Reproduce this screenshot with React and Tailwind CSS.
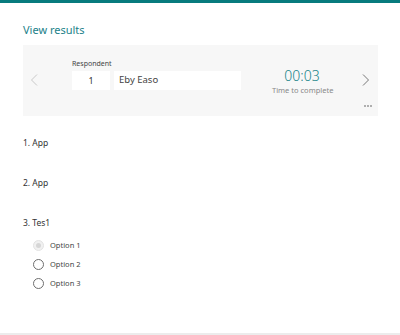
const options = ['Option 1', 'Option 2', 'Option 3'];

const Chevron = ({ dir, color }) => (
  <svg width="8" height="12" viewBox="0 0 8 12" fill="none">
    <path
      d={dir === 'left' ? 'M7 0.5 L1.5 6 L7 11.5' : 'M1 0.5 L6.5 6 L1 11.5'}
      stroke={color}
      strokeWidth="1"
    />
  </svg>
);

const Radio = ({ disabled }) =>
  disabled ? (
    <span className="w-[11px] h-[11px] rounded-full border border-[#e3e3e3] bg-[#f1f1f1] flex items-center justify-center">
      <span className="w-[5px] h-[5px] rounded-full bg-[#d6d6d6]" />
    </span>
  ) : (
    <span className="w-[11px] h-[11px] rounded-full border border-[#6e6e6e] bg-white" />
  );

export default function App() {
  return (
    <div className="w-[400px] h-[335px] bg-white flex flex-col font-['Noto_Sans',sans-serif] text-[#333]">
      <div className="h-[3px] bg-[#077b7e]" />
      <div className="flex-1 pl-[23px] pr-[22px]">
        <h1 className="mt-[20px] text-[11px] leading-[14px] text-[#1b8189]">View results</h1>

        <div className="mt-[8px] h-[71px] bg-[#f7f7f7] flex flex-col pt-[14px]">
          <div className="flex items-start">
            <div className="mt-[15px] ml-[7px]">
              <Chevron dir="left" color="#c8c8c8" />
            </div>
            <div className="ml-[34px]">
              <div className="text-[7px] leading-[10px] text-[#444]">Respondent</div>
              <div className="mt-[2px] flex gap-[4px]">
                <div className="w-[38px] h-[19px] bg-white flex items-center justify-center text-[9px]">1</div>
                <div className="w-[127px] h-[19px] bg-white flex items-center pl-[5px] text-[9.5px] text-[#444]">Eby Easo</div>
              </div>
            </div>
            <div className="ml-[31px] mt-[8px] w-[60px] text-center">
              <div className="text-[14px] leading-[18px] font-light text-[#168489]">00:03</div>
              <div className="text-[7.5px] leading-[10px] text-[#888] whitespace-nowrap">Time to complete</div>
            </div>
            <div className="ml-auto mr-[8px] mt-[15px]">
              <Chevron dir="right" color="#777" />
            </div>
          </div>
          <div className="mt-auto flex justify-end pr-[6px] pb-[9px]">
            <svg width="8" height="2" viewBox="0 0 8 2">
              <circle cx="1" cy="1" r="0.8" fill="#555" />
              <circle cx="4" cy="1" r="0.8" fill="#555" />
              <circle cx="7" cy="1" r="0.8" fill="#555" />
            </svg>
          </div>
        </div>

        <div className="mt-[21px] text-[8.5px] leading-[12px]">1. App</div>
        <div className="mt-[28px] text-[8.5px] leading-[12px]">2. App</div>
        <div className="mt-[28px] text-[8.5px] leading-[12px]">3. Tes1</div>
        <div className="mt-[7px] pl-[10px]">
          {options.map((o, i) => (
            <div key={o} className="h-[19px] flex items-center gap-[6px]">
              <Radio disabled={i === 0} />
              <span className="text-[7.5px] text-[#444]">{o}</span>
            </div>
          ))}
        </div>
      </div>
      <div className="h-[2px] bg-[#ececec]" />
    </div>
  );
}
